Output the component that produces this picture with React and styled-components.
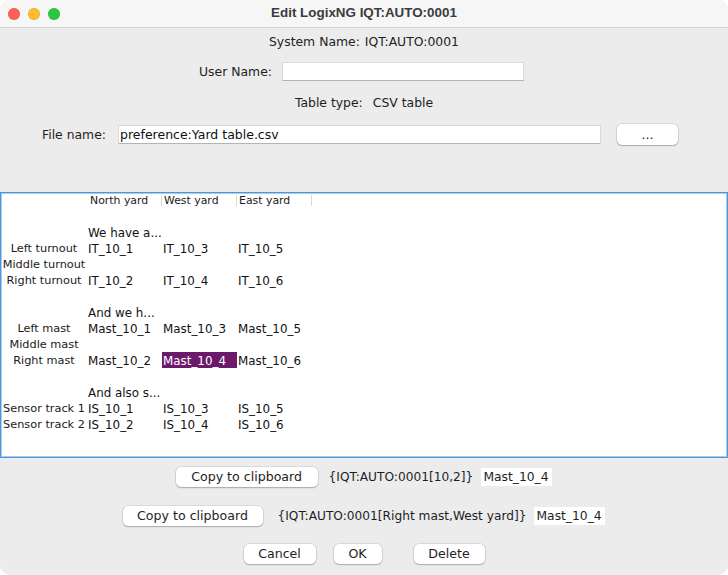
import React from "react";
import styled, { createGlobalStyle } from "styled-components";

const GlobalStyle = createGlobalStyle`
  html, body { margin: 0; padding: 0; background: #ffffff; }
  * { box-sizing: border-box; }
  body { font-family: "DejaVu Sans", "Liberation Sans", sans-serif; color: #1e1e1e; }
`;

const Window = styled.div`
  width: 728px;
  height: 575px;
  background: #ececec;
  border-radius: 10px;
  overflow: hidden;
  display: flex;
  flex-direction: column;
`;

const TitleBar = styled.div`
  height: 28px;
  flex: 0 0 28px;
  background: #f6f6f6;
  border-bottom: 1px solid #d2d2d2;
  display: grid;
  grid-template-columns: 1fr auto 1fr;
  align-items: center;
`;

const Lights = styled.div`
  display: flex;
  gap: 8px;
  padding-left: 8px;
  align-items: center;
`;

const Light = styled.span`
  width: 12px;
  height: 12px;
  border-radius: 50%;
  background: ${(p) => p.$color};
  box-shadow: inset 0 0 0 0.5px rgba(0, 0, 0, 0.12);
`;

const Title = styled.div`
  font-family: "Liberation Sans", Arial, sans-serif;
  font-weight: bold;
  font-size: 13.4px;
  color: #3b3b3b;
  padding-bottom: 2px;
`;

const Body = styled.div`
  flex: 1;
  display: flex;
  flex-direction: column;
  padding-top: 6px;
`;

const FormRow = styled.div`
  display: flex;
  justify-content: center;
  align-items: center;
  gap: ${(p) => p.$gap ?? 10}px;
  margin-top: ${(p) => p.$mt ?? 0}px;
  height: ${(p) => p.$h ?? 16}px;
  line-height: 16px;
  white-space: nowrap;
`;

const Text = styled.span`
  font-size: ${(p) => p.$fs ?? 12.4}px;
  margin-left: ${(p) => p.$ml ?? 0}px;
`;

const TextField = styled.div`
  width: ${(p) => p.$w}px;
  height: 19px;
  margin-right: ${(p) => p.$mr ?? 0}px;
  background: #fff;
  border: 1px solid #dadada;
  border-bottom-color: #b4b4b4;
  font-size: 12.5px;
  line-height: 17px;
  padding-left: 1px;
  color: #111;
`;

const MacButton = styled.div`
  width: ${(p) => p.$w}px;
  height: ${(p) => p.$h ?? 20}px;
  margin-left: ${(p) => p.$ml ?? 0}px;
  margin-right: ${(p) => p.$mr ?? 0}px;
  background: #ffffff;
  border-radius: 5px;
  box-shadow: 0 0 0 0.5px rgba(0, 0, 0, 0.16), 0 1px 1.5px rgba(0, 0, 0, 0.22);
  display: flex;
  align-items: center;
  justify-content: center;
  font-size: 12.6px;
  color: #1e1e1e;
  flex: 0 0 auto;
`;

const TablePane = styled.div`
  margin-top: 47px;
  height: 266px;
  background: #ffffff;
  border: 1px solid #4f95d9;
  box-shadow: inset 0 0 0 1px #a9cbee;
`;

const Grid = styled.div`
  display: grid;
  grid-template-columns: 86px 75px 75px 75px;
  grid-template-rows: 15px;
  grid-auto-rows: 16px;
`;

const HeaderCell = styled.div`
  position: relative;
  font-size: 10.9px;
  line-height: 15px;
  padding-left: ${(p) => p.$pl ?? 2}px;
  white-space: nowrap;
  color: #1a1a1a;
  ${(p) =>
    p.$sep &&
    `&::after {
      content: "";
      position: absolute;
      right: 0;
      top: 2px;
      height: 11px;
      width: 1px;
      background: #d9d9d9;
    }`}
`;

const RowHeader = styled.div`
  font-size: 11.3px;
  line-height: 14px;
  padding-top: 2px;
  text-align: center;
  white-space: nowrap;
  color: #1a1a1a;
`;

const Cell = styled.div`
  font-size: 11.9px;
  line-height: 14px;
  padding-top: 2px;
  padding-left: 1px;
  white-space: nowrap;
  background: ${(p) => (p.$sel ? "#6a1a69" : "transparent")};
  color: ${(p) => (p.$sel ? "#ffffff" : "#111111")};
`;

const ValueBox = styled.div`
  width: 71px;
  height: 18px;
  background: #ffffff;
  font-size: 12.3px;
  line-height: 18px;
  padding-left: 2px;
  margin-left: 8px;
`;

const rows = [
  ["", "", "", ""],
  ["", "We have a...", "", ""],
  ["Left turnout", "IT_10_1", "IT_10_3", "IT_10_5"],
  ["Middle turnout", "", "", ""],
  ["Right turnout", "IT_10_2", "IT_10_4", "IT_10_6"],
  ["", "", "", ""],
  ["", "And we h...", "", ""],
  ["Left mast", "Mast_10_1", "Mast_10_3", "Mast_10_5"],
  ["Middle mast", "", "", ""],
  ["Right mast", "Mast_10_2", "Mast_10_4", "Mast_10_6"],
  ["", "", "", ""],
  ["", "And also s...", "", ""],
  ["Sensor track 1", "IS_10_1", "IS_10_3", "IS_10_5"],
  ["Sensor track 2", "IS_10_2", "IS_10_4", "IS_10_6"],
];

export default function App() {
  return (
    <>
      <GlobalStyle />
      <Window>
        <TitleBar>
          <Lights>
            <Light $color="#fe5f57" />
            <Light $color="#febc2e" />
            <Light $color="#28c840" />
          </Lights>
          <Title>Edit LogixNG IQT:AUTO:0001</Title>
          <div />
        </TitleBar>
        <Body>
          <FormRow $gap={5}>
            <Text>System Name:</Text>
            <Text>IQT:AUTO:0001</Text>
          </FormRow>
          <FormRow $mt={12} $h={19}>
            <Text>User Name:</Text>
            <TextField $w={242} $mr={5} />
          </FormRow>
          <FormRow $mt={14}>
            <Text>Table type:</Text>
            <Text>CSV table</Text>
          </FormRow>
          <FormRow $mt={13} $h={21} $gap={12}>
            <Text>File name:</Text>
            <TextField $w={483}>preference:Yard table.csv</TextField>
            <MacButton $w={61} $h={21} $ml={4} $mr={8}>...</MacButton>
          </FormRow>
          <TablePane>
            <Grid>
              <HeaderCell />
              <HeaderCell $pl={3} $sep>North yard</HeaderCell>
              <HeaderCell $sep>West yard</HeaderCell>
              <HeaderCell $sep>East yard</HeaderCell>
              {rows.map((r, i) => (
                <React.Fragment key={i}>
                  <RowHeader>{r[0]}</RowHeader>
                  <Cell>{r[1]}</Cell>
                  <Cell $sel={i === 9}>{r[2]}</Cell>
                  <Cell>{r[3]}</Cell>
                </React.Fragment>
              ))}
            </Grid>
          </TablePane>
          <FormRow $mt={9} $h={20} $gap={0}>
            <MacButton $w={142}>Copy to clipboard</MacButton>
            <Text $ml={11} $fs={12.2}>{"{IQT:AUTO:0001[10,2]}"}</Text>
            <ValueBox>Mast_10_4</ValueBox>
          </FormRow>
          <FormRow $mt={19} $h={20} $gap={0}>
            <MacButton $w={140}>Copy to clipboard</MacButton>
            <Text $ml={15} $fs={12.2}>{"{IQT:AUTO:0001[Right mast,West yard]}"}</Text>
            <ValueBox>Mast_10_4</ValueBox>
          </FormRow>
          <FormRow $mt={18} $h={20} $gap={0}>
            <MacButton $w={72}>Cancel</MacButton>
            <MacButton $w={48} $ml={18}>OK</MacButton>
            <MacButton $w={71} $ml={32}>Delete</MacButton>
          </FormRow>
        </Body>
      </Window>
    </>
  );
}
